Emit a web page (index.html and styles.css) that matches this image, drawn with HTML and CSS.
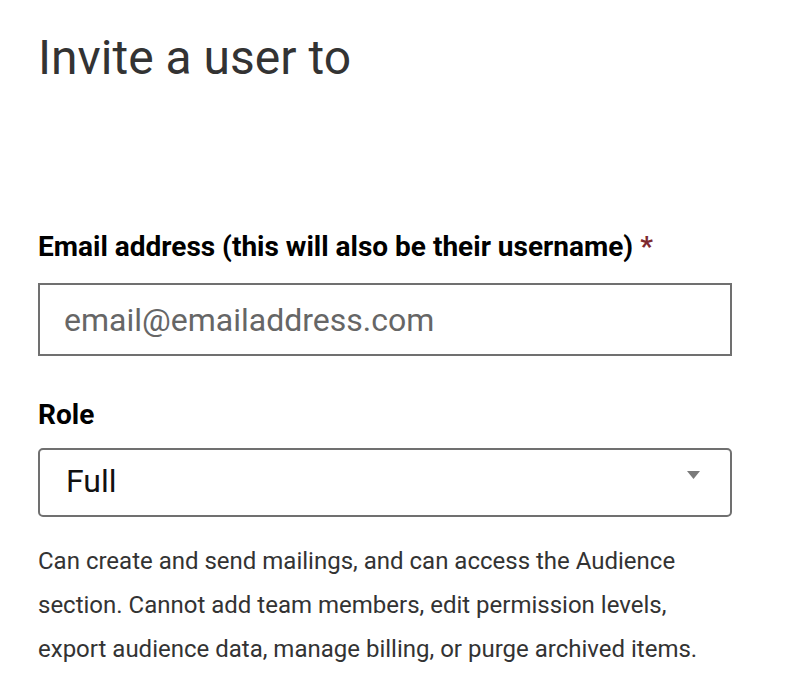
FILE: index.html
```html
<!DOCTYPE html>
<html lang="en">
<head>
<meta charset="utf-8">
<title>Invite a user</title>
<link rel="stylesheet" href="styles.css">
</head>
<body>
<main class="page">
  <h1 class="title">Invite a user to</h1>
  <form class="form">
    <div class="field field-email">
      <label class="label" for="email">Email address (this will also be their username) <span class="req">*</span></label>
      <input class="input" id="email" type="email" placeholder="email@emailaddress.com">
    </div>
    <div class="field field-role">
      <label class="label" for="role">Role</label>
      <div class="select" id="role">
        <span class="select-value">Full</span>
        <svg class="select-arrow" width="13" height="8" viewBox="0 0 13 8" aria-hidden="true"><path d="M0 0 H13 L6.5 8 Z" fill="#7a7a7a"/></svg>
      </div>
      <p class="help">Can create and send mailings, and can access the Audience section. Cannot add team members, edit permission levels, export audience data, manage billing, or purge archived items.</p>
    </div>
  </form>
</main>
</body>
</html>
```

FILE: styles.css
```css
html, body {
  margin: 0;
  padding: 0;
  background: #ffffff;
}

body {
  font-family: Roboto, "Liberation Sans", sans-serif;
  color: #333333;
}

.page {
  padding: 30px 0 0 38px;
  width: 694px;
}

.title {
  margin: 0;
  font-size: 48px;
  line-height: 56px;
  font-weight: 400;
  color: #333333;
}

.form {
  margin-top: 144px;
}

.field {
  display: flex;
  flex-direction: column;
}

.label {
  display: block;
  font-size: 28px;
  line-height: 34px;
  font-weight: 700;
  color: #000000;
  margin-bottom: 19px;
}

.req {
  color: #7e2a2f;
  font-weight: 700;
}

.input {
  box-sizing: border-box;
  width: 694px;
  height: 73px;
  margin: 0;
  padding: 0 24px;
  border: 2px solid #707070;
  border-radius: 0;
  font-family: Roboto, "Liberation Sans", sans-serif;
  font-size: 32px;
  color: #333333;
  background: #ffffff;
  outline: none;
}

.input::placeholder {
  color: #666666;
  opacity: 1;
}

.field-role {
  margin-top: 42px;
}

.field-role .label {
  margin-bottom: 16px;
}

.select {
  box-sizing: border-box;
  width: 694px;
  height: 69px;
  padding: 0 30px 4px 26px;
  border: 2px solid #707070;
  border-radius: 5px;
  display: flex;
  align-items: center;
  justify-content: space-between;
}

.select-value {
  font-size: 32px;
  color: #111111;
}

.select-arrow {
  display: block;
  align-self: flex-start;
  margin-top: 21px;
}

.help {
  margin: 22px 0 0;
  font-size: 24px;
  line-height: 44px;
  color: #333333;
}
```
